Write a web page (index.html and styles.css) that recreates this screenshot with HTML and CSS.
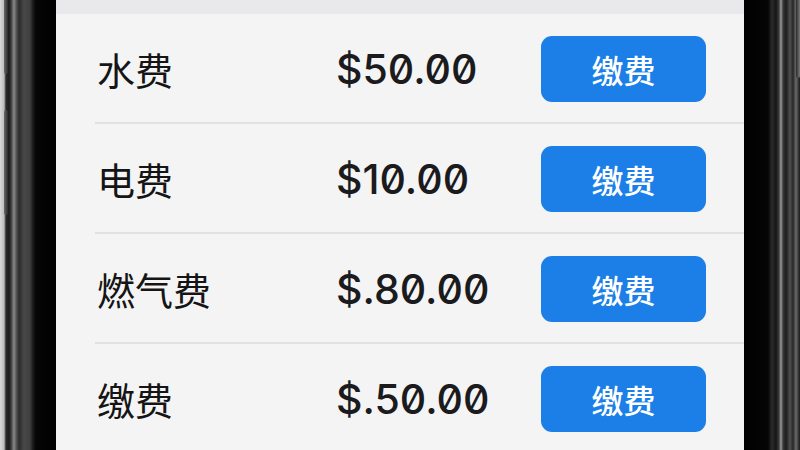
FILE: index.html
```html
<!DOCTYPE html>
<html lang="zh">
<head>
<meta charset="utf-8">
<title>缴费</title>
<link rel="stylesheet" href="styles.css">
</head>
<body>
<div class="phone">
  <div class="bezel bezel-left">
    <span class="side-btn side-btn-a"></span>
    <span class="side-btn side-btn-b"></span>
  </div>
  <div class="screen">
    <div class="topbar"></div>
    <ul class="bills">
      <li class="bill">
        <span class="bill-name">水费</span>
        <span class="bill-amount">$50.00</span>
        <button class="pay-btn">缴费</button>
      </li>
      <li class="bill">
        <span class="bill-name">电费</span>
        <span class="bill-amount">$10.00</span>
        <button class="pay-btn">缴费</button>
      </li>
      <li class="bill">
        <span class="bill-name">燃气费</span>
        <span class="bill-amount">$.80.00</span>
        <button class="pay-btn">缴费</button>
      </li>
      <li class="bill">
        <span class="bill-name">缴费</span>
        <span class="bill-amount">$.50.00</span>
        <button class="pay-btn">缴费</button>
      </li>
    </ul>
  </div>
  <div class="bezel bezel-right">
    <span class="side-btn side-btn-c"></span>
  </div>
</div>
</body>
</html>
```
FILE: styles.css
```css
* { box-sizing: border-box; }
html, body {
  margin: 0;
  padding: 0;
  width: 800px;
  height: 450px;
  overflow: hidden;
  background: #000;
}
.phone {
  display: flex;
  width: 800px;
  height: 450px;
}
.bezel {
  position: relative;
  flex: none;
  height: 100%;
}
.bezel-left {
  width: 56px;
  background: linear-gradient(to right,
    #d9d9d9 0px, #bdbdbd 4px, #2a2a2a 6px, #1b1b1b 9px,
    #3a3a3a 11px, #8a8a8a 14px, #5a5a5a 16px, #2c2c2c 19px,
    #484848 24px, #3e3e3e 30px, #1a1a1a 33px, #050505 36px, #000 56px);
}
.bezel-right {
  width: 56px;
  background: linear-gradient(to right,
    #000 0px, #050505 24px, #2b2b2b 28px, #151515 32px,
    #3d3d3d 35px, #9a9a9a 37px, #3a3a3a 39px, #1c1c1c 42px,
    #505050 46px, #262626 49px, #6a6a6a 52px, #2a2a2a 55px, #1a1a1a 56px);
}
.side-btn {
  position: absolute;
  width: 4px;
  border-radius: 2px;
  background: linear-gradient(to right, #6a6a6a, #2a2a2a);
}
.side-btn-a { left: 4px; top: -6px; height: 80px; }
.side-btn-b { left: 4px; top: 110px; height: 105px; }
.side-btn-c { right: 0; top: -6px; height: 84px; background: linear-gradient(to right, #2a2a2a, #7a7a7a); }

.screen {
  flex: 1;
  height: 100%;
  background: #f4f4f5;
  display: flex;
  flex-direction: column;
}
.topbar {
  height: 14px;
  flex: none;
  background: #e9e9eb;
}
.bills {
  list-style: none;
  margin: 0;
  padding: 0;
}
.bill {
  position: relative;
  height: 110px;
  display: grid;
  grid-template-columns: 239px 1fr 165px;
  align-items: center;
  padding: 0 38px 0 41px;
}
.bill::after {
  content: "";
  position: absolute;
  left: 39px;
  right: 0;
  bottom: 0;
  height: 2px;
  background: #e1e1e3;
}
.bill-name {
  font-family: "Noto Sans CJK SC", "Noto Sans", sans-serif;
  font-size: 38px;
  font-weight: 400;
  color: #151515;
  line-height: 1;
}
.bill-amount {
  font-family: Inter, "DejaVu Sans", sans-serif;
  font-feature-settings: "zero" 1;
  font-variant-numeric: slashed-zero;
  font-size: 41px;
  font-weight: 500;
  color: #1b1b1d;
  line-height: 1;
}
.pay-btn {
  width: 165px;
  height: 66px;
  border: none;
  border-radius: 11px;
  background: #1b7fe7;
  color: #fff;
  font-family: "Noto Sans CJK SC", "Noto Sans", sans-serif;
  font-size: 32px;
  font-weight: 500;
  line-height: 1;
  padding: 0;
}
```
